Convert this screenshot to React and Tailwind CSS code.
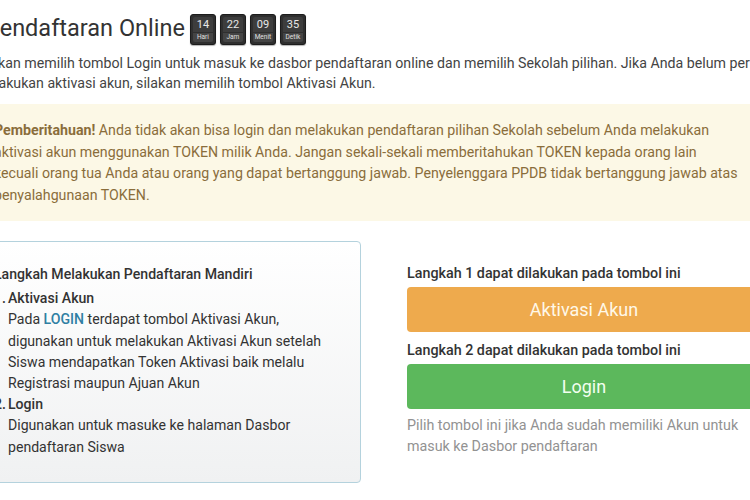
import React from "react";

const countdown = [
  { value: "14", label: "Hari" },
  { value: "22", label: "Jam" },
  { value: "09", label: "Menit" },
  { value: "35", label: "Detik" },
];

const CountBox = ({ value, label }) => (
  <div className="w-[26px] h-[31px] rounded-[3px] bg-[#2f2f2f] border border-[#1c1c1c] flex flex-col items-center p-[2px] shadow-[0_1px_1px_rgba(0,0,0,0.3)]">
    <div className="w-full h-[15px] bg-[#3d3d3d] rounded-t-[2px] flex items-center justify-center text-[11px] leading-none text-[#e8e8e8]">
      {value}
    </div>
    <div className="w-full flex-1 mt-[1px] bg-[#444] rounded-b-[2px] flex items-center justify-center text-[6.5px] leading-none text-[#e0e0e0]">
      {label}
    </div>
  </div>
);

export default function App() {
  return (
    <div className="w-[750px] h-[500px] overflow-hidden bg-white font-['Roboto',sans-serif] text-[#333]">
      <div className="ml-[-22px] w-[783px]">
        {/* title + countdown */}
        <div className="flex items-center h-[36px] mt-[11px] ml-[7px]">
          <h1 className="text-[23.5px] leading-none text-[#333] font-normal">
            Pendaftaran Online
          </h1>
          <div className="flex gap-[4px] ml-[5px]">
            {countdown.map((c) => (
              <CountBox key={c.label} value={c.value} label={c.label} />
            ))}
          </div>
        </div>

        <p className="mt-[7px] ml-[-3px] w-[840px] whitespace-nowrap text-[14.2px] leading-[19.5px] text-[#444]">
          Silakan memilih tombol Login untuk masuk ke dasbor pendaftaran online dan memilih Sekolah pilihan. Jika Anda belum pernah
          <br />
          melakukan aktivasi akun, silakan memilih tombol Aktivasi Akun.
        </p>

        {/* alert */}
        <div className="mt-[11px] bg-[#fcf8e6] pl-[16px] pr-[20px] pt-[16px] pb-[15px] whitespace-nowrap text-[14.2px] leading-[21.5px] text-[#8a6d3b]">
          <strong className="font-bold">Pemberitahuan!</strong> Anda tidak akan bisa login dan melakukan pendaftaran pilihan Sekolah sebelum Anda melakukan
          <br />
          aktivasi akun menggunakan TOKEN milik Anda. Jangan sekali-sekali memberitahukan TOKEN kepada orang lain
          <br />
          kecuali orang tua Anda atau orang yang dapat bertanggung jawab. Penyelenggara PPDB tidak bertanggung jawab atas
          <br />
          penyalahgunaan TOKEN.
        </div>

        {/* steps */}
        <div className="mt-[20px] grid grid-cols-[383px_354px] gap-x-[46px]">
          <div className="h-[242px] rounded-[4px] border border-[#b4d2dd] bg-gradient-to-b from-white to-[#f0f1f2] pl-[15px] pr-[14px] pt-[22px] text-[14.1px] leading-[21.2px] text-[#333]">
            <div className="font-medium">Langkah Melakukan Pendaftaran Mandiri</div>
            <div className="flex mt-[3px]">
              <span className="w-[14px] shrink-0 font-medium">1.</span>
              <div>
                <div className="font-medium">Aktivasi Akun</div>
                <div>
                  Pada <span className="text-[#2f7fa3] font-medium">LOGIN</span> terdapat tombol Aktivasi Akun, digunakan untuk melakukan Aktivasi Akun setelah Siswa mendapatkan Token Aktivasi baik melalu Registrasi maupun Ajuan Akun
                </div>
              </div>
            </div>
            <div className="flex">
              <span className="w-[14px] shrink-0 font-medium">2.</span>
              <div>
                <div className="font-medium">Login</div>
                <div>Digunakan untuk masuke ke halaman Dasbor pendaftaran Siswa</div>
              </div>
            </div>
          </div>

          <div className="pt-[22px]">
            <div className="text-[14.3px] leading-[21px] font-medium text-[#333]">
              Langkah 1 dapat dilakukan pada tombol ini
            </div>
            <button className="mt-[3px] w-full h-[45px] rounded-[4px] bg-[#eeaa4d] text-[#fff8e8] text-[18px]">
              Aktivasi Akun
            </button>
            <div className="mt-[8px] text-[14.3px] leading-[21px] font-medium text-[#333]">
              Langkah 2 dapat dilakukan pada tombol ini
            </div>
            <button className="mt-[3px] w-full h-[45px] rounded-[4px] bg-[#5cb85c] text-[#f2fff0] text-[18px]">
              Login
            </button>
            <div className="mt-[6px] text-[14.3px] leading-[21px] text-[#929292]">
              Pilih tombol ini jika Anda sudah memiliki Akun untuk masuk ke Dasbor pendaftaran
            </div>
          </div>
        </div>
      </div>
    </div>
  );
}
